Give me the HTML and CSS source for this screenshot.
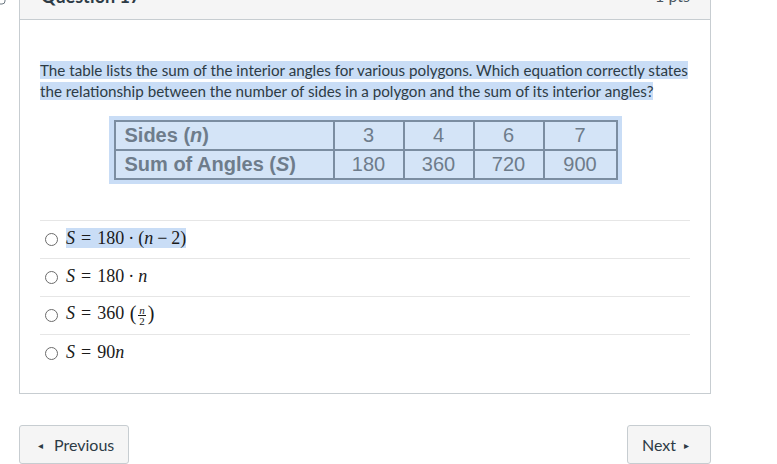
FILE: index.html
```html
<!DOCTYPE html>
<html>
<head>
<meta charset="utf-8">
<link rel="stylesheet" href="styles.css">
</head>
<body>
<div class="page">
  <div class="top-row">
    <div class="flag-col">
      <svg class="flag" width="19" height="10" viewBox="0 0 19 10">
        <path d="M-4 -6 L5 -6 L5 1 Q5 4 2 4 L-4 4" fill="none" stroke="#6b7780" stroke-width="1"/>
      </svg>
    </div>
    <div class="question">
      <div class="q-header">
        <span class="q-title">Question 17</span>
        <span class="q-pts">1 pts</span>
      </div>
      <div class="q-body">
        <p class="q-text"><span class="sel">The table lists the sum of the interior angles for various polygons. Which equation correctly states the relationship between the number of sides in a polygon and the sum of its interior angles?</span></p>
        <div class="fig-wrap">
          <div class="fig">
            <table class="poly">
              <tr>
                <th>Sides (<i>n</i>)</th>
                <td>3</td><td>4</td><td>6</td><td>7</td>
              </tr>
              <tr>
                <th>Sum of Angles (<i>S</i>)</th>
                <td>180</td><td>360</td><td>720</td><td>900</td>
              </tr>
            </table>
          </div>
        </div>
        <div class="answers">
          <label class="answer">
            <span class="radio"></span>
            <span class="math"><span class="sel"><i>S</i></span><span class="rel sel">=</span><span class="sel">180</span><span class="bin sel">·</span><span class="sel">(<i>n</i></span><span class="bin sel">−</span><span class="sel">2)</span></span>
          </label>
          <label class="answer">
            <span class="radio"></span>
            <span class="math"><i>S</i><span class="rel">=</span>180<span class="bin">·</span><i>n</i></span>
          </label>
          <label class="answer">
            <span class="radio"></span>
            <span class="math"><i>S</i><span class="rel">=</span>360 <span class="paren">(</span><span class="frac"><span class="num"><i>n</i></span><span class="den">2</span></span><span class="paren">)</span></span>
          </label>
          <label class="answer">
            <span class="radio"></span>
            <span class="math"><i>S</i><span class="rel">=</span>90<i>n</i></span>
          </label>
        </div>
      </div>
    </div>
  </div>
  <div class="nav">
    <button class="btn prev"><span class="tri">◂</span>Previous</button>
    <button class="btn next">Next<span class="tri">▸</span></button>
  </div>
</div>
</body>
</html>
```

FILE: styles.css
```css
html, body {
  margin: 0;
  padding: 0;
  background: #ffffff;
}
body {
  font-family: Lato, "Liberation Sans", sans-serif;
  color: #2d3b45;
  width: 777px;
  height: 464px;
  overflow: hidden;
}
.page {
  width: 777px;
}
.top-row {
  display: flex;
  margin-top: -25px;
}
.flag-col {
  width: 19px;
  flex: none;
  padding-top: 25px;
}
.flag {
  display: block;
}
.question {
  width: 692px;
  box-sizing: border-box;
  border: 1px solid #c7cdd1;
  flex: none;
}
.q-header {
  height: 43px;
  background: #f5f5f5;
  border-bottom: 1px solid #c7cdd1;
  display: flex;
  justify-content: space-between;
  align-items: center;
  padding: 0 20px 0 21px;
}
.q-title {
  font-weight: 700;
  font-size: 18px;
  line-height: 20px;
  margin-top: -3px;
}
.q-pts {
  font-size: 16px;
  line-height: 20px;
  color: #4a5660;
  margin-top: -3px;
}
.q-body {
  padding: 40px 20px 21px 20px;
}
.q-text {
  margin: 0;
  font-size: 15.2px;
  line-height: 21px;
  color: #2d3b45;
}
.sel {
  background: #c9ddf6;
}
.fig-wrap {
  display: flex;
  justify-content: center;
  margin-top: 14px;
}
.fig {
  background: #c9ddf6;
  padding: 4px 4px 4px 5px;
}
.poly {
  border-collapse: collapse;
  background: #d4e4f7;
  font-family: "Liberation Sans", Arial, sans-serif;
  color: #6e7c8b;
  font-size: 20px;
}
.poly th, .poly td {
  border: 2px solid #7b8da1;
  height: 27px;
  padding: 0;
  line-height: 27px;
}
.poly th {
  text-align: left;
  font-weight: 700;
  width: 208px;
  padding-left: 9px;
}
.poly td {
  text-align: center;
  font-weight: 400;
  width: 68px;
}
.poly td:last-child {
  width: 71px;
}
.answers {
  margin-top: 36px;
}
.answer {
  display: flex;
  align-items: center;
  height: 37px;
  border-top: 1px solid #e6e6e6;
  padding-left: 5px;
}
.radio {
  width: 11px;
  height: 11px;
  border: 1px solid #6b6b6b;
  border-radius: 50%;
  background: #fff;
  flex: none;
  margin-right: 8px;
  margin-top: -1px;
}
.math {
  font-family: "Liberation Serif", "DejaVu Serif", serif;
  font-size: 18px;
  line-height: 22px;
  color: #1a1a1a;
  white-space: nowrap;
  margin-top: -4px;
}
.math i {
  font-style: italic;
}
.rel {
  padding: 0 6px;
}
.bin {
  padding: 0 4px;
}
.paren {
  font-size: 20px;
  margin: 0 1px;
  position: relative;
  top: 1px;
}
.frac {
  display: inline-flex;
  flex-direction: column;
  align-items: center;
  vertical-align: middle;
  font-size: 11px;
  line-height: 10px;
  margin: 0 1px;
}
.num {
  border-bottom: 1px solid #1a1a1a;
  padding: 0 1px;
}
.nav {
  display: flex;
  justify-content: space-between;
  width: 692px;
  margin-left: 19px;
  margin-top: 31px;
}
.btn {
  font-family: Lato, "Liberation Sans", sans-serif;
  font-size: 16px;
  color: #2d3b45;
  background: #f5f5f5;
  border: 1px solid #c7cdd1;
  border-radius: 3px;
  height: 39px;
  padding: 0;
  display: flex;
  align-items: center;
  justify-content: flex-start;
}
.prev {
  width: 110px;
  padding-left: 18px;
}
.next {
  width: 84px;
  padding-left: 14px;
}
.tri {
  font-size: 10px;
}
.prev .tri {
  margin: 0 11px 0 0;
}
.next .tri {
  margin: 0 0 0 8px;
}
```
